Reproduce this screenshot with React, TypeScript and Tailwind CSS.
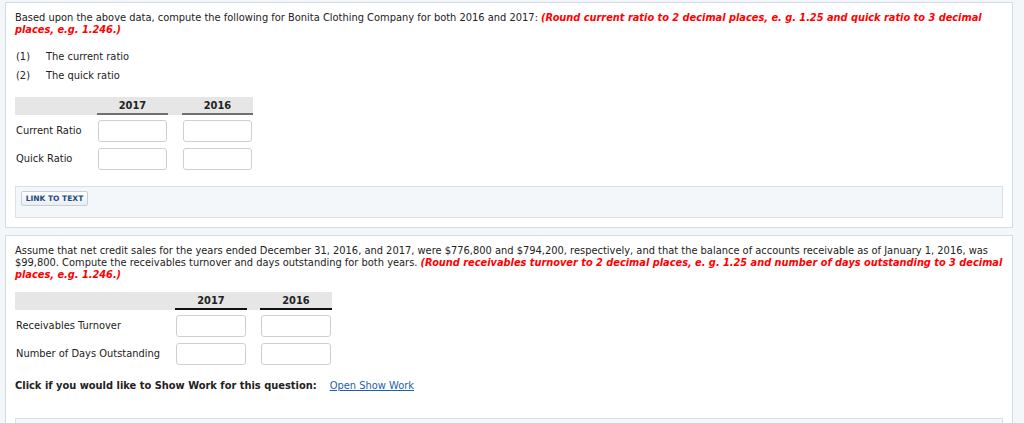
import React from "react";

const font = { fontFamily: '"DejaVu Sans", Verdana, sans-serif' };

function Cell() {
  return <div className="h-[22px] w-full rounded-[3px] border border-[#cfcfcf] bg-white" />;
}

function RatioTable({
  labelW,
  colW,
  gap,
  line,
  rows,
}: {
  labelW: number;
  colW: number;
  gap: number;
  line: string;
  rows: string[];
}) {
  return (
    <div className="w-fit">
      <div className="flex h-[18px] bg-[#e6e6e6]">
        <div style={{ width: labelW }} />
        <div style={{ width: colW }} className={`border-b-2 ${line} text-center font-bold leading-[17px]`}>
          2017
        </div>
        <div style={{ width: gap }} />
        <div style={{ width: colW }} className={`border-b-2 ${line} text-center font-bold leading-[17px]`}>
          2016
        </div>
      </div>
      <div className="mt-[5px] flex flex-col gap-[6px]">
        {rows.map((r) => (
          <div key={r} className="flex items-center">
            <div style={{ width: labelW }} className="pl-[1px] whitespace-nowrap">
              {r}
            </div>
            <div style={{ width: colW }} className="px-[1px]">
              <Cell />
            </div>
            <div style={{ width: gap }} />
            <div style={{ width: colW }} className="px-[1px]">
              <Cell />
            </div>
          </div>
        ))}
      </div>
    </div>
  );
}

function LinkBox({ children }: { children?: React.ReactNode }) {
  return (
    <div className="h-[32px] border border-[#d8e0e8] bg-[#f4f7fa] px-[5px] pt-[4px]">
      {children}
    </div>
  );
}

export default function App() {
  return (
    <div
      className="min-h-screen bg-[#f4f7fa] pt-[2px] pl-[5px] pr-[11px] text-[9.9px] leading-[12px] text-[#222]"
      style={font}
    >
      <section className="border border-[#d3dce6] bg-white px-[9px] pt-[9px] pb-[9px]">
        <p className="whitespace-nowrap">
          Based upon the above data, compute the following for Bonita Clothing Company for both 2016 and 2017:{" "}
          <span className="text-[9.8px] font-bold italic text-[#ff0000]">
            (Round current ratio to 2 decimal places, e. g. 1.25 and quick ratio to 3 decimal
            <br />
            places, e.g. 1.246.)
          </span>
        </p>
        <div className="mt-[11px] flex flex-col">
          <div className="flex h-[19px] items-center">
            <span className="w-[31px] pl-[1px]">(1)</span>
            <span>The current ratio</span>
          </div>
          <div className="flex h-[19px] items-center">
            <span className="w-[31px] pl-[1px]">(2)</span>
            <span>The quick ratio</span>
          </div>
        </div>
        <div className="mt-[12px]">
          <RatioTable
            labelW={82}
            colW={71}
            gap={14}
            line="border-[#707070]"
            rows={["Current Ratio", "Quick Ratio"]}
          />
        </div>
        <div className="mt-[16px]">
          <LinkBox>
            <button className="h-[15px] w-[67px] rounded-[2px] border border-[#c4d0dc] bg-gradient-to-b from-[#ffffff] to-[#e8eef4] text-[7.5px] font-bold leading-[13px] text-[#24497a]">
              LINK TO TEXT
            </button>
          </LinkBox>
        </div>
      </section>

      <section className="mt-[7px] border border-[#d3dce6] bg-white px-[9px] pt-[9px] pb-[9px]">
        <p className="whitespace-nowrap">
          Assume that net credit sales for the years ended December 31, 2016, and 2017, were $776,800 and $794,200,
          respectively, and that the balance of accounts receivable as of January 1, 2016, was
          <br />
          $99,800. Compute the receivables turnover and days outstanding for both years.{" "}
          <span className="text-[9.8px] font-bold italic text-[#ff0000]">
            (Round receivables turnover to 2 decimal places, e. g. 1.25 and number of days outstanding to 3 decimal
            <br />
            places, e.g. 1.246.)
          </span>
        </p>
        <div className="mt-[11px]">
          <RatioTable
            labelW={160}
            colW={72}
            gap={13}
            line="border-[#111]"
            rows={["Receivables Turnover", "Number of Days Outstanding"]}
          />
        </div>
        <p className="mt-[15px]">
          <span className="font-bold">Click if you would like to Show Work for this question:</span>
          <a href="#" className="ml-[13px] text-[#1c5fa8] underline">
            Open Show Work
          </a>
        </p>
        <div className="mt-[26px]">
          <LinkBox>
            <button className="h-[15px] w-[67px] rounded-[2px] border border-[#c4d0dc] bg-gradient-to-b from-[#ffffff] to-[#e8eef4]" />
          </LinkBox>
        </div>
      </section>
    </div>
  );
}
